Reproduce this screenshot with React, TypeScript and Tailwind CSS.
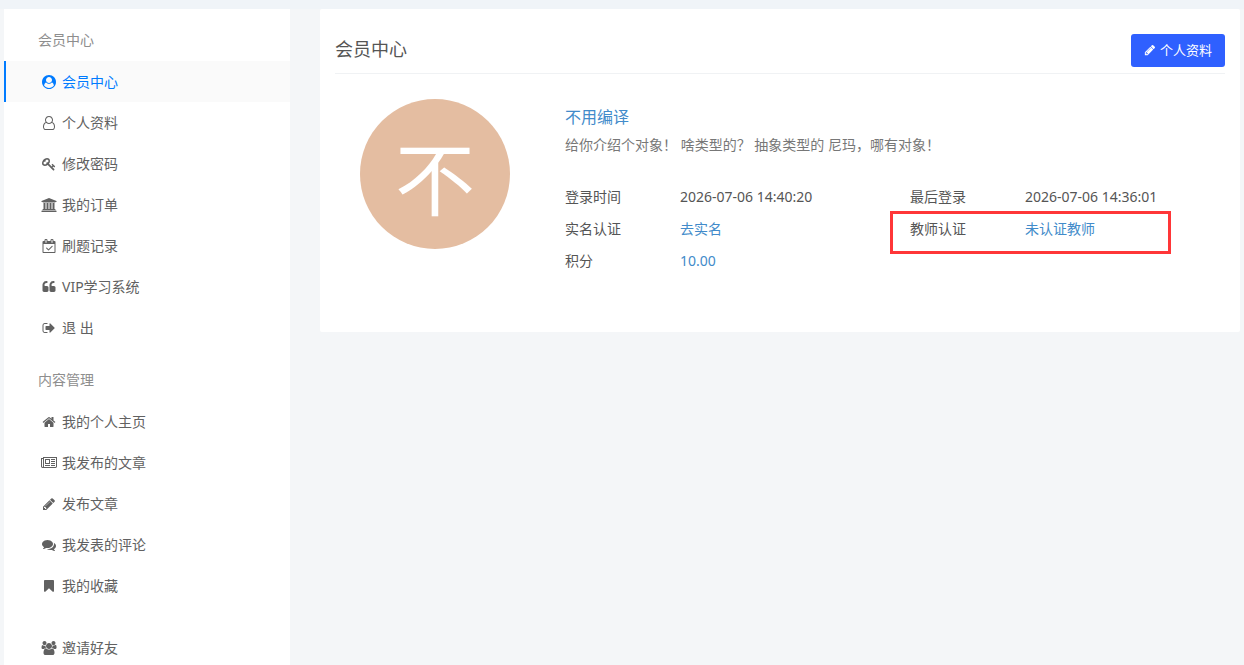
type Glyph = { w: number; d: string };

const icons: Record<string, Glyph> = {
  userCircle: {
    w: 1792,
    d: "M1523 1339q-22-155-87.5-257.5t-184.5-118.5q-67 74-159.5 115.5t-195.5 41.5-195.5-41.5-159.5-115.5q-119 16-184.5 118.5t-87.5 257.5q106 150 271 237.5t356 87.5 356-87.5 271-237.5zm-243-699q0-159-112.5-271.5t-271.5-112.5-271.5 112.5-112.5 271.5 112.5 271.5 271.5 112.5 271.5-112.5 112.5-271.5zm512 256q0 182-71 347.5t-190.5 286-285.5 191.5-349 71q-182 0-348-71t-286-191-191-286-71-348 71-348 191-286 286-191 348-71 348 71 286 191 191 286 71 348z",
  },
  userOutline: {
    w: 1536,
    d: "M1201 784q47 14 89.5 38t89 73 79.5 115.5 55 172 22 236.5q0 154-100 263.5t-241 109.5h-854q-141 0-241-109.5t-100-263.5q0-131 22-236.5t55-172 79.5-115.5 89-73 89.5-38q-79-125-79-272 0-104 40.5-198.5t109.5-163.5 163.5-109.5 198.5-40.5 198.5 40.5 163.5 109.5 109.5 163.5 40.5 198.5q0 147-79 272zm-433-656q-159 0-271.5 112.5t-112.5 271.5 112.5 271.5 271.5 112.5 271.5-112.5 112.5-271.5-112.5-271.5-271.5-112.5zm427 1536q88 0 150.5-71.5t62.5-173.5q0-239-78.5-377t-225.5-145q-145 127-336 127t-336-127q-147 7-225.5 145t-78.5 377q0 102 62.5 173.5t150.5 71.5h854z",
  },
  key: {
    w: 1792,
    d: "M832 512q0-80-56-136t-136-56-136 56-56 136q0 42 19 83-41-19-83-19-80 0-136 56t-56 136 56 136 136 56 136-56 56-136q0-42-19-83 41 19 83 19 80 0 136-56t56-136zm851 704q0 17-49 66t-66 49q-9 0-28.5-16t-36.5-33-38.5-40-24.5-26l-96 96 220 220q28 28 28 68 0 42-39 81t-81 39q-40 0-68-28l-671-671q-176 131-365 131-163 0-265.5-102.5t-102.5-265.5q0-160 95-313t248-248 313-95q163 0 265.5 102.5t102.5 265.5q0 189-131 365l355 355 96-96q-3-3-26-24.5t-40-38.5-33-36.5-16-28.5q0-17 49-66t66-49q13 0 23 10 6 6 46 44.5t82 79.5 86.5 86 73 78 28.5 41z",
  },
  bank: {
    w: 1920,
    d: "M960 0l960 384v128h-128q0 26-20.5 45t-48.5 19h-1526q-28 0-48.5-19t-20.5-45h-128v-128zm-704 640h256v768h128v-768h256v768h128v-768h256v768h128v-768h256v768h59q28 0 48.5 19t20.5 45v64h-1664v-64q0-26 20.5-45t48.5-19h59v-768zm1595 960q28 0 48.5 19t20.5 45v128h-1920v-128q0-26 20.5-45t48.5-19h1782z",
  },
  calendar: {
    w: 1664,
    d: "M1303 964l-512 512q-10 9-23 9t-23-9l-288-288q-9-10-9-23t9-22l46-46q9-9 22-9t23 9l220 220 444-444q10-9 23-9t22 9l46 46q9 9 9 22t-9 23zm-1175 700h1408v-1024h-1408v1024zm384-1216v-288q0-14-9-23t-23-9h-64q-14 0-23 9t-9 23v288q0 14 9 23t23 9h64q14 0 23-9t9-23zm768 0v-288q0-14-9-23t-23-9h-64q-14 0-23 9t-9 23v288q0 14 9 23t23 9h64q14 0 23-9t9-23zm384-64v1280q0 52-38 90t-90 38h-1408q-52 0-90-38t-38-90v-1280q0-52 38-90t90-38h128v-96q0-66 47-113t113-47h64q66 0 113 47t47 113v96h384v-96q0-66 47-113t113-47h64q66 0 113 47t47 113v96h128q52 0 90 38t38 90z",
  },
  quote: {
    w: 1792,
    d: "M832 960v384q0 80-56 136t-136 56h-384q-80 0-136-56t-56-136v-704q0-104 40.5-198.5t109.5-163.5 163.5-109.5 198.5-40.5h64q26 0 45 19t19 45v128q0 26-19 45t-45 19h-64q-106 0-181 75t-75 181v32q0 40 28 68t68 28h224q80 0 136 56t56 136zm896 0v384q0 80-56 136t-136 56h-384q-80 0-136-56t-56-136v-704q0-104 40.5-198.5t109.5-163.5 163.5-109.5 198.5-40.5h64q26 0 45 19t19 45v128q0 26-19 45t-45 19h-64q-106 0-181 75t-75 181v32q0 40 28 68t68 28h224q80 0 136 56t56 136z",
  },
  signOut: {
    w: 1792,
    d: "M704 1440q0 4 1 20t.5 26.5-3 23.5-10 19.5-20.5 6.5h-320q-119 0-203.5-84.5t-84.5-203.5v-704q0-119 84.5-203.5t203.5-84.5h320q13 0 22.5 9.5t9.5 22.5q0 4 1 20t.5 26.5-3 23.5-10 19.5-20.5 6.5h-320q-66 0-113 47t-47 113v704q0 66 47 113t113 47h312l11.5 1 11.5 3 8 5.5 7 9 2 13.5zm928-544q0 26-19 45l-544 544q-19 19-45 19t-45-19-19-45v-288h-448q-26 0-45-19t-19-45v-384q0-26 19-45t45-19h448v-288q0-26 19-45t45-19 45 19l544 544q19 19 19 45z",
  },
  home: {
    w: 1792,
    d: "M1472 992v480q0 26-19 45t-45 19h-384v-384h-256v384h-384q-26 0-45-19t-19-45v-480q0-1 .5-3t.5-3l575-474 575 474q1 2 1 6zm223-69l-62 74q-8 9-21 11h-3q-13 0-21-7l-692-577-692 577q-12 8-24 7-13-2-21-11l-62-74q-8-10-7-23.5t11-21.5l719-599q32-26 76-26t76 26l244 204v-195q0-14 9-23t23-9h192q14 0 23 9t9 23v408l219 182q10 8 11 21.5t-7 23.5z",
  },
  newspaper: {
    w: 2048,
    d: "M1024 512h-384v384h384v-384zm128 640v128h-640v-128h640zm0-768v640h-640v-640h640zm640 768v128h-512v-128h512zm0-256v128h-512v-128h512zm0-256v128h-512v-128h512zm0-256v128h-512v-128h512zm-1536 960v-960h-128v960q0 26 19 45t45 19 45-19 19-45zm1664 0v-1088h-1536v1088q0 33-11 64h1483q26 0 45-19t19-45zm128-1216v1216q0 80-56 136t-136 56h-1664q-80 0-136-56t-56-136v-1088h256v-128h1792z",
  },
  pencil: {
    w: 1792,
    d: "M491 1536l91-91-235-235-91 91v107h128v128h107zm523-928q0-22-22-22-10 0-17 7l-542 542q-7 7-7 17 0 22 22 22 10 0 17-7l542-542q7-7 7-17zm-54-192l416 416-832 832h-416v-416zm683 96q0 53-37 90l-166 166-416-416 166-165q36-38 90-38 53 0 91 38l235 234q37 39 37 91z",
  },
  comments: {
    w: 1792,
    d: "M1408 768q0 139-94 257t-256.5 186.5-353.5 68.5q-86 0-176-16-124 88-278 128-36 9-86 16h-3q-11 0-20.5-8t-11.5-21q-1-3-1-6.5t.5-6.5 2-6l2.5-5 3.5-5.5 4-5 4.5-5 4-4.5q5-6 23-25t26-29.5 22.5-29 25-38.5 20.5-44q-124-72-195-177t-71-224q0-139 94-257t256.5-186.5 353.5-68.5 353.5 68.5 256.5 186.5 94 257zm384 256q0 120-71 224.5t-195 176.5q10 24 20.5 44t25 38.5 22.5 29 26 29.5 23 25q1 1 4 4.5t4.5 5 4 5 3.5 5.5l2.5 5 2 6 .5 6.5-1 6.5q-3 14-13 22t-22 7q-50-7-86-16-154-40-278-128-90 16-176 16-271 0-472-132 58 4 88 4 161 0 309-45t264-129q125-92 192-212t67-254q0-77-23-152 129 71 204 178t75 230z",
  },
  bookmark: {
    w: 1792,
    d: "M1420 128q23 0 44 9 33 13 52.5 41t19.5 62v1289q0 34-19.5 62t-52.5 41q-19 8-44 8-48 0-83-32l-441-424-441 424q-36 33-83 33-23 0-44-9-33-13-52.5-41t-19.5-62v-1289q0-34 19.5-62t52.5-41q21-9 44-9h1048z",
  },
  users: {
    w: 1920,
    d: "M593 896q-162 5-265 128h-134q-82 0-138-40.5t-56-118.5q0-353 124-353 6 0 43.5 21t97.5 42.5 119 21.5q67 0 133-23-5 37-5 66 0 159 93 293zm1071 637q0 120-73 189.5t-194 69.5h-874q-121 0-194-69.5t-73-189.5q0-53 3.5-103.5t14-109 26.5-108.5 43-97.5 62-81 85.5-53.5 111.5-20q10 0 43 21.5t73 48 107 48 135 21.5 135-21.5 107-48 73-48 43-21.5q61 0 111.5 20t85.5 53.5 62 81 43 97.5 26.5 108.5 14 109 3.5 103.5zm-1024-1277q0 106-75 181t-181 75-181-75-75-181 75-181 181-75 181 75 75 181zm704 384q0 159-112.5 271.5t-271.5 112.5-271.5-112.5-112.5-271.5 112.5-271.5 271.5-112.5 271.5 112.5 112.5 271.5zm576 225q0 78-56 118.5t-138 40.5h-134q-103-123-265-128 93-134 93-293 0-29-5-66 66 23 133 23 59 0 119-21.5t97.5-42.5 43.5-21q124 0 124 353zm-128-609q0 106-75 181t-181 75-181-75-75-181 75-181 181-75 181 75 75 181z",
  },
};

function Icon({ name, className }: { name: string; className: string }) {
  const icon = icons[name];
  return (
    <svg viewBox={`0 0 ${icon.w} 1792`} className={className} fill="currentColor" aria-hidden="true">
      <path d={icon.d} />
    </svg>
  );
}

const menu = [
  {
    title: "会员中心",
    items: [
      { icon: "userCircle", label: "会员中心", active: true },
      { icon: "userOutline", label: "个人资料" },
      { icon: "key", label: "修改密码" },
      { icon: "bank", label: "我的订单" },
      { icon: "calendar", label: "刷题记录" },
      { icon: "quote", label: "VIP学习系统" },
      { icon: "signOut", label: "退 出" },
    ],
  },
  {
    title: "内容管理",
    items: [
      { icon: "home", label: "我的个人主页" },
      { icon: "newspaper", label: "我发布的文章" },
      { icon: "pencil", label: "发布文章" },
      { icon: "comments", label: "我发表的评论" },
      { icon: "bookmark", label: "我的收藏" },
    ],
  },
  {
    title: "",
    items: [{ icon: "users", label: "邀请好友" }],
  },
];

const details = [
  { label: "登录时间", value: "2026-07-06 14:40:20" },
  { label: "最后登录", value: "2026-07-06 14:36:01" },
  { label: "实名认证", value: "去实名", link: true },
  { label: "教师认证", value: "未认证教师", link: true, marked: true },
  { label: "积分", value: "10.00", link: true },
];

function Sidebar() {
  return (
    <nav className="w-[286px] shrink-0 bg-white">
      {menu.map((group, index) => (
        <div key={index} className="pt-[10px] pb-px">
          {group.title ? (
            <h2 className="h-[42px] pl-[34px] leading-[42px] text-[#8e8e8e]">{group.title}</h2>
          ) : (
            <div className="h-[10px]"></div>
          )}
          <ul>
            {group.items.map((item) => (
              <li key={item.label}>
                <a
                  href="#"
                  className={
                    item.active
                      ? "flex h-[41px] items-center gap-1 border-l-2 border-[#007bff] bg-[#fafafa] pl-[34px] text-[#007bff]"
                      : "flex h-[41px] items-center gap-1 border-l-2 border-transparent pl-[34px] text-[#616161]"
                  }
                >
                  <Icon name={item.icon} className="h-[14px] w-[18px]" />
                  {item.label}
                </a>
              </li>
            ))}
          </ul>
        </div>
      ))}
    </nav>
  );
}

export default function App() {
  return (
    <div
      lang="zh-CN"
      className="flex min-h-screen gap-[30px] border-t-[9px] border-[#f0f4f8] bg-[#f4f6f8] px-1 font-['Noto_Sans','Noto_Sans_CJK_SC',sans-serif] text-sm text-[#555555]"
    >
      <Sidebar />

      <main className="min-w-0 flex-1">
        <section className="rounded-xs bg-white pt-[25px] pb-[55px]">
          <div className="mx-[15px] flex items-start justify-between border-b border-[#f0f2f4] pb-[6px]">
            <h1 className="text-lg leading-[30px]">会员中心</h1>
            <button
              type="button"
              className="flex h-[33px] items-center gap-1 rounded-[3px] bg-[#2f60ff] px-[13px] pb-px text-[13px] text-white"
            >
              <Icon name="pencil" className="size-3" />
              个人资料
            </button>
          </div>

          <div className="grid grid-cols-4 pt-[25px]">
            <div className="flex justify-center">
              <div className="flex size-[150px] items-center justify-center rounded-full bg-[#e4bda1] pt-2 text-[80px] leading-none text-white">
                不
              </div>
            </div>

            <div className="col-span-3">
              <div className="px-[15px] pt-1">
                <a href="#" className="block text-base leading-7 text-[#428bca]">
                  不用编译
                </a>
                <p className="leading-7 text-[#777777]">
                  给你介绍个对象！ 啥类型的？ 抽象类型的 尼玛，哪有对象！
                </p>
              </div>

              {/* Account details, two label/value pairs per row */}
              <dl className="mt-[22px] grid grid-cols-2">
                {details.map((row) => (
                  <div key={row.label} className="relative grid grid-cols-3 leading-8">
                    <dt className="px-[15px]">{row.label}</dt>
                    <dd className="col-span-2 px-[15px]">
                      {row.link ? (
                        <a href="#" className="text-[#428bca]">
                          {row.value}
                        </a>
                      ) : (
                        row.value
                      )}
                    </dd>
                    {row.marked && (
                      <div className="pointer-events-none absolute -top-0.5 -left-[5px] h-[43px] w-[281px] border-3 border-[#ff3638]"></div>
                    )}
                  </div>
                ))}
              </dl>
            </div>
          </div>
        </section>
      </main>
    </div>
  );
}
